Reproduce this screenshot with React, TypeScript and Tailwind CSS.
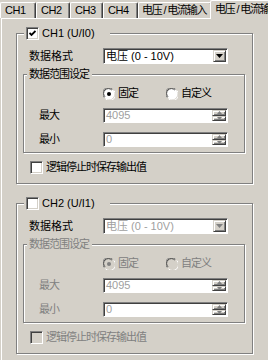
import React from 'react';

// Win2000-style settings page: tabs + two channel group boxes
const tabs = [
  { label: 'CH1', w: 'w-[36px]', t: 'tracking-[-0.5px] pl-[4px]' },
  { label: 'CH2', w: 'w-[34px]', t: 'tracking-[-0.5px] pl-[4px]' },
  { label: 'CH3', w: 'w-[33px]', t: 'tracking-[-0.5px] pl-[4px]' },
  { label: 'CH4', w: 'w-[35px]', t: 'tracking-[-0.5px] pl-[4px]' },
  { label: '电压 / 电流输入', w: 'w-[74px]', t: 'tracking-[-1.2px] pl-[3px]' },
];

const zh = 'text-[11px] leading-[13px] tracking-[-1px] whitespace-nowrap';

function Check({ checked, disabled }: { checked?: boolean; disabled?: boolean }) {
  return (
    <span
      className={`flex h-[13px] w-[13px] shrink-0 items-center justify-center border border-[#808080] border-r-white border-b-white shadow-[inset_1px_1px_0_#404040,inset_-1px_-1px_0_#d4d0c8] ${
        disabled ? 'bg-[#d4d0c8]' : 'bg-white'
      }`}
    >
      {checked && (
        <svg width="7" height="7" viewBox="0 0 7 7">
          <path d="M0.5 3 L2.5 5 L6.5 1" fill="none" stroke="#000" strokeWidth="1.8" />
        </svg>
      )}
    </span>
  );
}

function Radio({ checked, disabled }: { checked?: boolean; disabled?: boolean }) {
  return (
    <svg width="12" height="12" viewBox="0 0 12 12" className="shrink-0">
      <circle cx="6" cy="6" r="5.5" fill={disabled ? '#d4d0c8' : '#fff'} />
      <path d="M1.2 9.5 A5.5 5.5 0 0 1 9.5 1.2" fill="none" stroke="#808080" />
      <path d="M2 8.8 A4.5 4.5 0 0 1 8.8 2" fill="none" stroke="#404040" />
      <path d="M10.8 2.5 A5.5 5.5 0 0 1 2.5 10.8" fill="none" stroke="#fff" />
      {checked && <circle cx="6" cy="6" r="2" fill={disabled ? '#808080' : '#000'} />}
    </svg>
  );
}

function Raised({ children, className = '' }: { children?: React.ReactNode; className?: string }) {
  return (
    <span
      className={`flex items-center justify-center bg-[#d4d0c8] border border-[#d4d0c8] border-r-[#404040] border-b-[#404040] shadow-[inset_1px_1px_0_#fff,inset_-1px_-1px_0_#808080] ${className}`}
    >
      {children}
    </span>
  );
}

function Select({ value, disabled }: { value: string; disabled?: boolean }) {
  return (
    <div className="flex h-[16px] w-[125px] items-stretch bg-white border border-[#808080] border-r-white border-b-white shadow-[inset_1px_1px_0_#404040]">
      <span className={`flex-1 pl-[2px] pt-px text-[11px] leading-[13px] whitespace-nowrap ${disabled ? 'text-[#a0a0a0]' : 'text-black'}`}>{value}</span>
      <Raised className="w-[13px] my-px mr-px">
        <svg width="7" height="4" viewBox="0 0 7 4">
          <path d="M0 0 H7 L3.5 4 Z" fill={disabled ? '#808080' : '#000'} />
        </svg>
      </Raised>
    </div>
  );
}

function Spin({ value }: { value: string }) {
  return (
    <div className="flex h-[15px] w-[125px] items-stretch bg-white border border-[#808080] border-r-white border-b-white shadow-[inset_1px_1px_0_#404040]">
      <span className="flex-1 pl-[2px] text-[11px] leading-[13px] text-[#a0a0a0]">{value}</span>
      <div className="my-px mr-px flex w-[14px] flex-col">
        <Raised className="h-1/2">
          <svg width="5" height="3" viewBox="0 0 5 3">
            <path d="M0 3 H5 L2.5 0 Z" fill="#808080" />
          </svg>
        </Raised>
        <Raised className="h-1/2">
          <svg width="5" height="3" viewBox="0 0 5 3">
            <path d="M0 0 H5 L2.5 3 Z" fill="#808080" />
          </svg>
        </Raised>
      </div>
    </div>
  );
}

const etched = 'border border-[#808080] shadow-[inset_1px_1px_0_#fff,1px_1px_0_#fff]';

function Channel({ name, enabled, className = '' }: { name: string; enabled: boolean; className?: string }) {
  const sub = enabled ? 'text-black' : 'text-[#808080]';
  return (
    <div className={`relative w-[237px] ${etched} ${className}`}>
      <div className="absolute left-[7px] top-[-7px] flex h-[13px] w-[86px] items-center gap-[3px] bg-[#d4d0c8] pl-[2px]">
        <Check checked={enabled} />
        <span className="text-[11px] leading-[13px] text-black">{name}</span>
      </div>

      <div className="mt-[14px] flex h-[16px] items-center">
        <span className={`ml-[12px] w-[74px] text-black ${zh} tracking-[0px]`}>数据格式</span>
        <Select value="电压 (0 - 10V)" disabled={!enabled} />
      </div>

      <div className={`relative ml-[6px] mt-[10px] w-[222px] ${etched}`}>
        <span className={`absolute left-[3px] top-[-7px] bg-[#d4d0c8] pl-[2px] pr-[3px] ${zh} ${sub}`}>数据范围设定</span>
        <div className="mt-[12px] flex h-[13px] items-center">
          <div className="ml-[79px] flex w-[63px] items-center gap-[3px]">
            <Radio checked disabled={!enabled} />
            <span className={`${zh} ${sub}`}>固定</span>
          </div>
          <div className="flex items-center gap-[3px]">
            <Radio disabled={!enabled} />
            <span className={`${zh} ${sub}`}>自定义</span>
          </div>
        </div>
        <div className="mt-[8px] flex items-center">
          <span className={`ml-[15px] w-[64px] ${zh} ${sub}`}>最大</span>
          <Spin value="4095" />
        </div>
        <div className="mt-[9px] mb-[5px] flex items-center">
          <span className={`ml-[15px] w-[64px] ${zh} ${sub}`}>最小</span>
          <Spin value="0" />
        </div>
      </div>

      <div className="mt-[8px] mb-[9px] ml-[13px] flex h-[13px] items-center gap-[3px]">
        <Check disabled={!enabled} />
        <span className={`${zh} ${sub}`}>逻辑停止时保存输出值</span>
      </div>
    </div>
  );
}

export default function App() {
  return (
    <div className="h-[360px] w-[268px] overflow-hidden bg-[#d4d0c8] font-['Liberation_Sans','Noto_Sans_CJK_SC',sans-serif]">
      <div className="flex h-[18px] items-end">
        {tabs.map(t => (
          <div
            key={t.label}
            className={`${t.w} ${t.t} h-[16px] shrink-0 overflow-hidden whitespace-nowrap rounded-t-[2px] border border-b-0 border-white border-r-[#404040] text-[11px] leading-[14px] text-black shadow-[inset_-1px_0_0_#808080]`}
          >
            {t.label}
          </div>
        ))}
        <div className="relative z-10 -ml-[2px] h-[19px] w-[80px] shrink-0 self-start rounded-t-[2px] border-l border-t border-white bg-[#d4d0c8] pl-[4px] pt-[1px] text-[11px] leading-[14px] tracking-[-1.2px] whitespace-nowrap text-black">
          电压 / 电流输入
        </div>
      </div>
      <div className="ml-px h-full border-l border-t border-white pl-[14px] pt-[14px]">
        <Channel name="CH1 (U/I0)" enabled />
        <Channel name="CH2 (U/I1)" enabled={false} className="mt-[19px]" />
      </div>
    </div>
  );
}
